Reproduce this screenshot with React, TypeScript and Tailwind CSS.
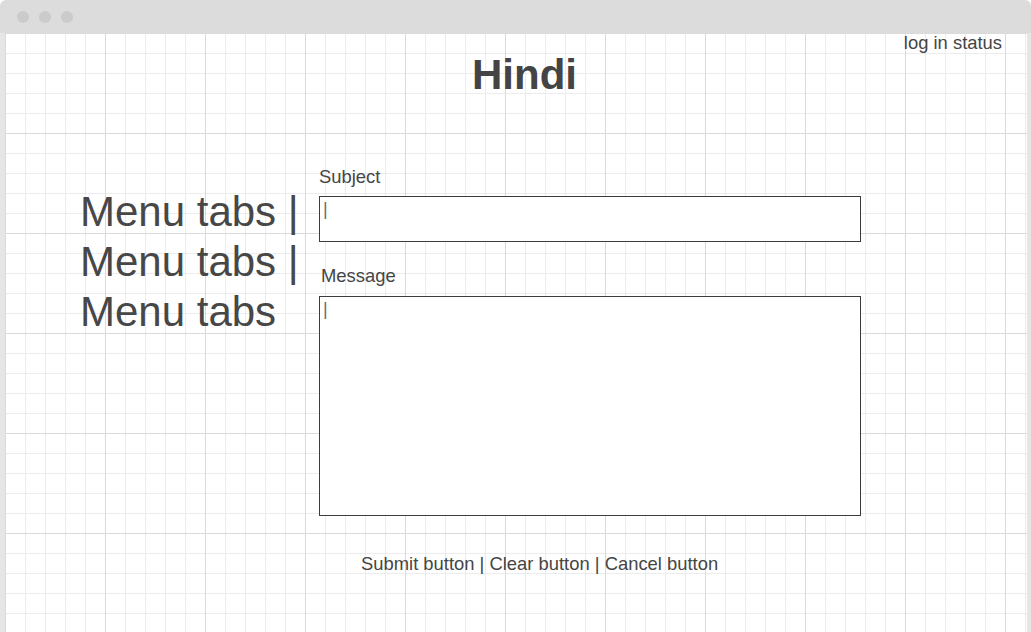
export default function App() {
  const font = 'font-["Liberation_Sans",Arial,sans-serif]';

  return (
    <div className={`${font} flex h-[632px] w-[1031px] flex-col overflow-hidden bg-white text-[#454545]`}>
      {/* Window chrome */}
      <div className="flex h-[33px] shrink-0 items-center gap-[10px] rounded-t-[6px] bg-[#dcdcdc] pl-[17px]">
        <span className="size-[12px] rounded-full bg-[#cbcbcb]" />
        <span className="size-[12px] rounded-full bg-[#cbcbcb]" />
        <span className="size-[12px] rounded-full bg-[#cbcbcb]" />
      </div>

      {/* Canvas */}
      <div className="flex flex-1 border-l-[5px] border-r-[4px] border-[#e6e6e6]">
        <div className="flex flex-1 flex-col bg-white bg-[linear-gradient(to_right,#dadada_1px,transparent_1px),linear-gradient(to_bottom,#dadada_1px,transparent_1px),linear-gradient(to_right,#ececec_1px,transparent_1px),linear-gradient(to_bottom,#ececec_1px,transparent_1px)] bg-[size:100px_100px,100px_100px,20px_20px,20px_20px]">
          {/* Header */}
          <div className="flex justify-end pr-[25px] text-[18.4px] leading-[20px]">log in status</div>
          <h1 className="flex justify-center pl-[17px] text-[42px] font-bold leading-[44px] text-[#444]">Hindi</h1>

          {/* Main */}
          <div className="mt-[70px] flex">
            <nav className="mt-[20px] w-[314px] shrink-0 pl-[75px] text-[42px] leading-[50px] text-[#474747]">
              <div>Menu tabs |</div>
              <div>Menu tabs |</div>
              <div>Menu tabs</div>
            </nav>

            <form className="flex w-[542px] flex-col">
              <label className="text-[18.4px] leading-[20px]">Subject</label>
              <div className="mt-[9px] h-[46px] border border-[#3c3c3c] bg-white pl-[3px] pt-[2px] text-[18px] leading-[20px] text-[#6a6a6a]">
                |
              </div>

              <label className="mt-[24px] pl-[2px] text-[18.4px] leading-[20px]">Message</label>
              <div className="mt-[10px] h-[220px] border border-[#3c3c3c] bg-white pl-[3px] pt-[2px] text-[18px] leading-[20px] text-[#6a6a6a]">
                |
              </div>

              <div className="mt-[38px] pl-[42px] text-[18.4px] leading-[20px] whitespace-nowrap">
                Submit button | Clear button | Cancel button
              </div>
            </form>
          </div>
        </div>
      </div>
    </div>
  );
}
